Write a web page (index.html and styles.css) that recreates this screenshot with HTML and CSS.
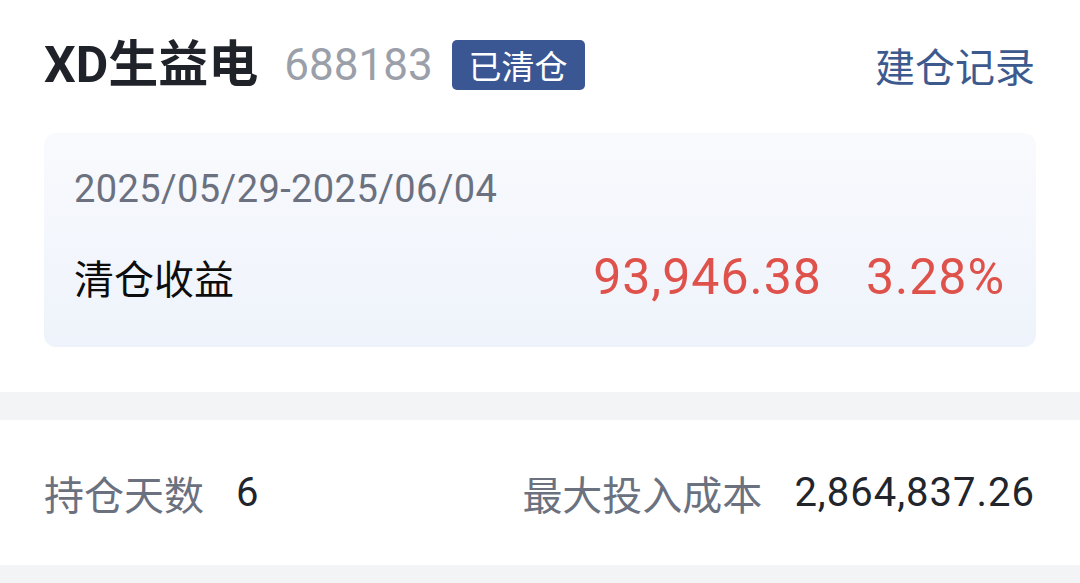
FILE: index.html
```html
<!DOCTYPE html>
<html lang="zh-CN">
<head>
    <meta charset="UTF-8">
    <meta name="viewport" content="width=device-width, initial-scale=1.0">
    <title>清仓详情</title>
    <link rel="stylesheet" href="styles.css">
</head>
<body>
    <section class="summary">
        <header class="stock-head">
            <div class="stock-name">
                <h1>XD生益电</h1>
                <span class="stock-code">688183</span>
                <span class="badge">已清仓</span>
            </div>
            <a class="record-link" href="#">建仓记录</a>
        </header>
        <div class="profit-card">
            <div class="period">2025/05/29-2025/06/04</div>
            <div class="profit-row">
                <span class="profit-label">清仓收益</span>
                <div class="profit-values">
                    <span>93,946.38</span>
                    <span>3.28%</span>
                </div>
            </div>
        </div>
    </section>

    <section class="stats">
        <div class="stat">
            <span class="stat-label">持仓天数</span>
            <span class="stat-value">6</span>
        </div>
        <div class="stat">
            <span class="stat-label">最大投入成本</span>
            <span class="stat-value">2,864,837.26</span>
        </div>
    </section>
</body>
</html>
```

FILE: styles.css
```css
* {
    box-sizing: border-box;
    margin: 0;
    padding: 0;
}

body {
    font-family: Roboto, "Noto Sans CJK SC", sans-serif;
    background-color: #f3f4f6;
    color: #1f2229;
}

.summary {
    background-color: #ffffff;
    padding: 0 44px 45px;
}

.stock-head {
    height: 130px;
    display: flex;
    justify-content: space-between;
    align-items: center;
}

.stock-name {
    display: flex;
    align-items: center;
}

.stock-name h1 {
    font-size: 50px;
    font-weight: 700;
    line-height: 1;
    color: #1f2229;
}

.stock-code {
    margin-left: 26px;
    font-size: 44px;
    color: #9a9fa9;
    line-height: 1;
}

.badge {
    margin-left: 19px;
    height: 50px;
    padding: 0 17px;
    display: flex;
    align-items: center;
    background-color: #3a5794;
    color: #ffffff;
    font-size: 33px;
    border-radius: 5px;
}

.record-link {
    font-size: 40px;
    color: #3d5a8f;
    text-decoration: none;
    margin-right: 1px;
}

.profit-card {
    margin-top: 3px;
    height: 214px;
    padding: 36px 31px 0 30px;
    border-radius: 12px;
    background: linear-gradient(180deg, #f9fafd 0%, #eef3fb 100%);
}

.period {
    font-size: 38px;
    line-height: 40px;
    letter-spacing: 0.4px;
    color: #6b717f;
}

.profit-row {
    margin-top: 40px;
    height: 56px;
    display: flex;
    justify-content: space-between;
    align-items: center;
}

.profit-label {
    font-size: 40px;
    color: #0d0d0d;
}

.profit-values {
    display: flex;
    gap: 44px;
    font-size: 50px;
    letter-spacing: 1px;
    color: #df524b;
}

.stats {
    margin-top: 28px;
    height: 145px;
    padding: 0 45px 0 44px;
    background-color: #ffffff;
    display: flex;
    justify-content: space-between;
    align-items: center;
}

.stat {
    display: flex;
    align-items: center;
    gap: 32px;
}

.stat-label {
    font-size: 40px;
    color: #6b717f;
}

.stat-value {
    font-size: 40px;
    letter-spacing: 1px;
    color: #22252b;
}
```
